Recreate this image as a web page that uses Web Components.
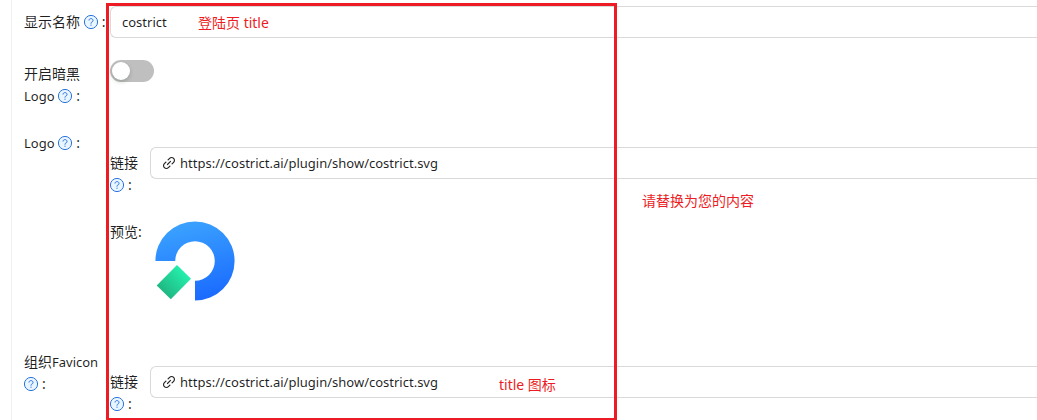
<!DOCTYPE html>
<html lang="zh-CN">
<head>
<meta charset="utf-8">
<title>costrict</title>
<style>
  body { margin: 0; background: #fff; font: 14px/22px "Noto Sans", "Noto Sans CJK SC", sans-serif; color: rgba(0,0,0,.88); }
</style>
</head>
<body>
<settings-page></settings-page>

<template id="settings-page">
  <style>
    :host { display: block; position: relative; overflow: hidden; min-height: 100vh; box-sizing: border-box; padding-left: 11px; }
    main { display: flex; flex-direction: column; gap: 20px; box-sizing: border-box; min-height: 100vh; padding: 6px 0 5px 12px; border-left: 1px solid #f0f0f0; }
    .nested { display: flex; flex-direction: column; gap: 20px; padding-top: 20px; }
    .nested form-row { --label-width: 40px; }
    .frame { position: absolute; top: 3px; bottom: -1px; left: 106px; width: 505px; border: 3px solid #ed1c24; pointer-events: none; }
    note-text { position: absolute; }
    .n1 { left: 198px; top: 12px; }
    .n2 { left: 642px; top: 190px; }
    .n3 { left: 499px; top: 374px; }
  </style>
  <main>
    <form-row label="显示名称" help><text-field label="显示名称" value="costrict"></text-field></form-row>
    <form-row label="开启暗黑 Logo" help><toggle-switch label="开启暗黑 Logo"></toggle-switch></form-row>
    <form-row label="Logo" help>
      <div class="nested">
        <form-row label="链接" help><text-field label="链接" link value="https://costrict.ai/plugin/show/costrict.svg"></text-field></form-row>
        <form-row label="预览"><brand-logo></brand-logo></form-row>
      </div>
    </form-row>
    <form-row label="组织Favicon" help>
      <div class="nested">
        <form-row label="链接" help><text-field label="链接" link value="https://costrict.ai/plugin/show/costrict.svg"></text-field></form-row>
      </div>
    </form-row>
  </main>
  <div class="frame"></div>
  <note-text class="n1">登陆页 title</note-text>
  <note-text class="n2">请替换为您的内容</note-text>
  <note-text class="n3">title 图标</note-text>
</template>

<template id="form-row">
  <style>
    :host { display: grid; grid-template-columns: var(--label-width, 86px) minmax(0, 1fr); }
    .label { padding-top: 5px; }
    .latin { font-size: 13px; }
    .tail { white-space: nowrap; }
    .tail help-icon { margin-right: 4px; }
  </style>
  <div class="label"></div>
  <div><slot></slot></div>
</template>

<template id="help-icon">
  <style>
    :host { display: inline-block; width: 14px; height: 14px; vertical-align: -2px; }
    svg { display: block; overflow: visible; }
  </style>
  <svg width="14" height="14" viewBox="0 0 14 14" fill="none" stroke="#2b74de" aria-hidden="true">
    <circle cx="7" cy="7" r="6.6" fill="#e9f5ff"/>
    <path d="M5 5.5C5 4.3 5.9 3.6 7 3.6s2 .7 2 1.9c0 .9-.6 1.4-1.3 1.7-.5.2-.7.5-.7 1v.5"/>
    <circle cx="7" cy="10.2" r=".6" fill="#2b74de" stroke="none"/>
  </svg>
</template>

<template id="text-field">
  <style>
    :host { display: block; }
    label { display: flex; align-items: center; gap: 4px; height: 32px; box-sizing: border-box; padding-left: 11px; border: 1px solid #d9d9d9; border-right: 0; border-radius: 6px 0 0 6px; }
    svg { flex: none; }
    input { flex: 1; min-width: 0; height: 22px; padding: 0; border: 0; outline: 0; background: none; font: inherit; font-size: 13px; color: inherit; }
    :host(:not([link])) svg { display: none; }
  </style>
  <label>
    <svg width="14" height="14" viewBox="64 64 896 896" fill="currentColor" aria-hidden="true"><path d="M574 665.4a8.03 8.03 0 00-11.3 0L446.5 781.6c-53.8 53.8-144.6 59.5-204 0-59.5-59.5-53.8-150.2 0-204l116.2-116.2c3.1-3.1 3.1-8.2 0-11.3l-39.8-39.8a8.03 8.03 0 00-11.3 0L191.4 526.5c-84.6 84.6-84.6 221.5 0 306s221.5 84.6 306 0l116.2-116.2c3.1-3.1 3.1-8.2 0-11.3L574 665.4zm258.6-474c-84.6-84.6-221.5-84.6-306 0L410.3 307.6a8.03 8.03 0 000 11.3l39.7 39.7c3.1 3.1 8.2 3.1 11.3 0l116.2-116.2c53.8-53.8 144.6-59.5 204 0 59.5 59.5 53.8 150.2 0 204L665.3 562.6a8.03 8.03 0 000 11.3l39.8 39.8c3.1 3.1 8.2 3.1 11.3 0l116.2-116.2c84.5-84.6 84.5-221.5 0-306.1zM610.1 372.3a8.03 8.03 0 00-11.3 0L372.3 598.7a8.03 8.03 0 000 11.3l39.6 39.6c3.1 3.1 8.2 3.1 11.3 0l226.4-226.4c3.1-3.1 3.1-8.2 0-11.3l-39.5-39.6z"/></svg>
    <input type="text">
  </label>
</template>

<template id="toggle-switch">
  <style>
    :host { display: flex; padding-top: 2px; }
    input { appearance: none; display: flex; align-items: center; box-sizing: border-box; width: 44px; height: 22px; margin: 0; padding: 2px; border-radius: 11px; background: #bfbfbf; cursor: pointer; }
    input::before { content: ""; width: 18px; height: 18px; border-radius: 9px; background: #fff; box-shadow: 0 2px 4px rgba(0,35,11,.2); }
    input:checked { justify-content: flex-end; background: #1677ff; }
  </style>
  <input type="checkbox" role="switch">
</template>

<template id="brand-logo">
  <style>
    :host { display: block; padding-bottom: 20px; }
    svg { display: block; }
  </style>
  <svg width="90" height="90" viewBox="0 0 90 90" role="img" aria-label="Logo">
    <defs>
      <linearGradient id="ring" x1=".35" y1="0" x2=".6" y2="1"><stop stop-color="#3ba3ff"/><stop offset="1" stop-color="#1a6aff"/></linearGradient>
      <linearGradient id="gem" gradientUnits="userSpaceOnUse" x1="34" y1="56" x2="14" y2="76"><stop stop-color="#24eeac"/><stop offset="1" stop-color="#20b883"/></linearGradient>
    </defs>
    <path fill="url(#ring)" d="M5.4 45A39.6 39.6 0 1 1 45 84.6V64.8A19.8 19.8 0 1 0 25.2 45Z"/>
    <path fill="url(#gem)" d="M27 49 41 62.8 20.8 83.2 6.7 69.4Z"/>
  </svg>
</template>

<template id="note-text">
  <style>:host { display: block; color: #ed1c24; white-space: nowrap; pointer-events: none; }</style>
  <slot></slot>
</template>

<script>
  class Base extends HTMLElement {
    constructor() {
      super();
      this.attachShadow({ mode: "open" }).append(document.getElementById(this.localName).content.cloneNode(true));
    }
  }
  class FormControl extends Base {
    connectedCallback() {
      const input = this.shadowRoot.querySelector("input");
      input.setAttribute("aria-label", this.getAttribute("label"));
      if (this.hasAttribute("value")) input.value = this.getAttribute("value");
    }
  }
  class FormRow extends Base {
    connectedCallback() {
      const label = this.shadowRoot.querySelector(".label");
      // Latin words are set one size down beside the Chinese text.
      for (const part of this.getAttribute("label").split(/([A-Za-z]+)/)) {
        if (/[A-Za-z]/.test(part)) {
          const span = document.createElement("span");
          span.className = "latin";
          span.textContent = part;
          label.append(span);
        } else {
          label.append(part);
        }
      }
      if (this.hasAttribute("help")) {
        const tail = document.createElement("span");
        tail.className = "tail";
        tail.append(document.createElement("help-icon"), ":");
        label.append(" ", tail);
      } else {
        label.append(":");
      }
    }
  }
  customElements.define("help-icon", class extends Base {});
  customElements.define("brand-logo", class extends Base {});
  customElements.define("note-text", class extends Base {});
  customElements.define("text-field", class extends FormControl {});
  customElements.define("toggle-switch", class extends FormControl {});
  customElements.define("form-row", FormRow);
  customElements.define("settings-page", class extends Base {});
</script>
</body>
</html>
